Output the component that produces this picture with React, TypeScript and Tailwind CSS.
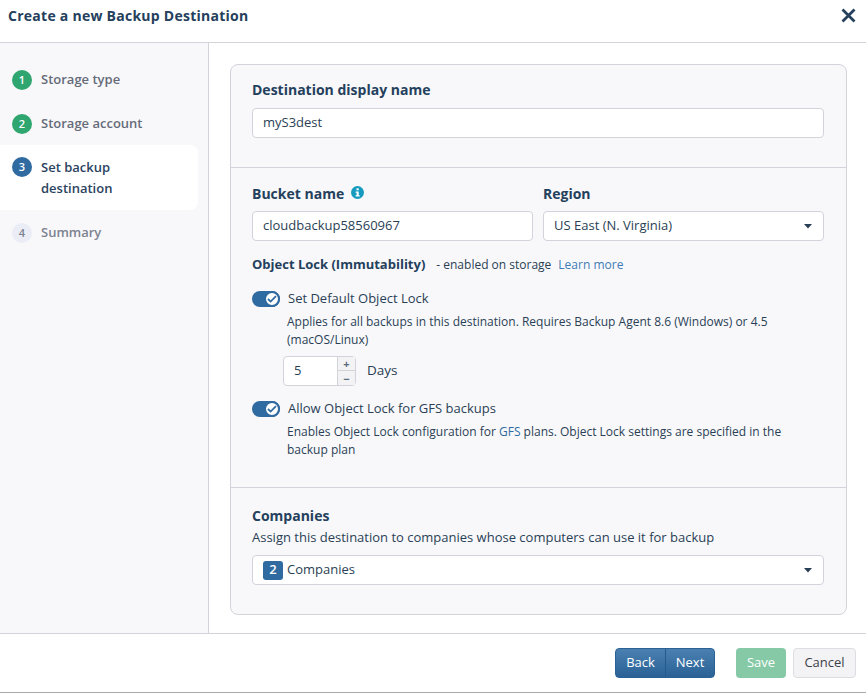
import React from 'react';

const steps = [
  { n: 1, label: 'Storage type', state: 'done' },
  { n: 2, label: 'Storage account', state: 'done' },
  { n: 3, label: 'Set backup destination', state: 'active' },
  { n: 4, label: 'Summary', state: 'todo' },
];

const Caret = () => (
  <svg width="8" height="5" viewBox="0 0 8 5" className="shrink-0">
    <path d="M0 0h8L4 4.5z" fill="#2a3f55" />
  </svg>
);

const Toggle = () => (
  <div className="relative h-4 w-[28px] shrink-0 rounded-full bg-[#2f6aa0]">
    <div className="absolute right-0 top-0 flex h-4 w-4 items-center justify-center rounded-full border-2 border-[#2f6aa0] bg-white">
      <svg width="10" height="8" viewBox="0 0 10 8" fill="none">
        <path d="M1 4l2.6 2.6L9 1.2" stroke="#2f6aa0" strokeWidth="1.8" />
      </svg>
    </div>
  </div>
);

const App: React.FC = () => {
  return (
    <div className="flex h-[693px] w-[866px] flex-col overflow-hidden border-b border-[#a9a9ad] bg-white font-['Open_Sans',sans-serif] text-[13px] text-[#2a3f55]">
      <header className="flex h-[43px] shrink-0 items-start justify-between border-b border-[#d3d3dc] pl-2 pr-[10px] pt-[6px]">
        <h1 className="text-[14px] font-bold leading-5 tracking-[0.26px] text-[#24405c]">Create a new Backup Destination</h1>
        <svg width="15" height="15" viewBox="0 0 15 15" className="mt-[2px]">
          <path d="M1.5 1.5l12 12M13.5 1.5l-12 12" stroke="#24405c" strokeWidth="2.8" />
        </svg>
      </header>

      <div className="flex min-h-0 flex-1">
        <aside className="w-[209px] shrink-0 border-r border-[#d3d3dc] bg-[#f8f8fb] pt-[15px] pr-[10px]">
          {steps.map((s) => (
            <div
              key={s.n}
              className={
                s.state === 'active'
                  ? '-mt-px mb-px flex h-[65px] w-[198px] gap-[9px] rounded-r-lg bg-white pl-3 pt-3'
                  : 'flex h-11 w-[198px] items-center gap-[9px] pl-3'
              }
            >
              <div
                className={
                  s.n < 3
                    ? 'flex h-5 w-5 shrink-0 items-center justify-center rounded-full bg-[#2fa56f] text-[11px] font-semibold text-white'
                    : s.n === 3
                      ? 'flex h-5 w-5 shrink-0 items-center justify-center rounded-full bg-[#2f6aa0] text-[11px] font-semibold text-white'
                      : 'flex h-5 w-5 shrink-0 items-center justify-center rounded-full bg-[#eaedf5] text-[11px] font-semibold text-[#7d8290]'
                }
              >
                {s.n}
              </div>
              <span
                className={
                  s.state === 'active'
                    ? 'w-[100px] text-[13px] font-semibold leading-[21px] text-[#2a4360]'
                    : s.state === 'done'
                      ? 'text-[13px] font-semibold text-[#666b78]'
                      : 'text-[13px] font-semibold text-[#7d8290]'
                }
              >
                {s.label}
              </span>
            </div>
          ))}
        </aside>

        <main className="min-w-0 flex-1 pl-[21px] pr-5 pt-[21px]">
          <div className="h-[551px] w-[617px] rounded-lg border border-[#d3d3dc] bg-[#f8f8fb]">
            <section className="h-[103px] border-b border-[#d3d3dc] px-[21px] pt-[15px]">
              <div className="text-[14px] font-bold leading-5 text-[#24405c]">Destination display name</div>
              <div className="mt-[8px] flex h-[30px] w-[572px] items-center rounded border border-[#d3d3dc] bg-white px-[10px] text-[13px]">
                myS3dest
              </div>
            </section>

            <section className="h-[320px] border-b border-[#d3d3dc] px-[21px] pt-[16px]">
              <div className="flex gap-[10px]">
                <div className="w-[281px]">
                  <div className="flex h-5 items-start gap-[7px] text-[14px] font-bold leading-[19px] text-[#24405c]">
                    Bucket name
                    <svg width="13" height="13" viewBox="0 0 13 13" className="mt-[2px]">
                      <circle cx="6.5" cy="6.5" r="6.5" fill="#169bc0" />
                      <rect x="5.5" y="2.3" width="2.2" height="2" fill="#fff" />
                      <path d="M4.6 5.5h3.1v3.8h1v1.2H4.6V9.3h1V6.7h-1z" fill="#fff" />
                    </svg>
                  </div>
                  <div className="mt-[7px] flex h-[30px] items-center rounded border border-[#d3d3dc] bg-white px-[10px] text-[13px]">
                    cloudbackup58560967
                  </div>
                </div>
                <div className="w-[281px]">
                  <div className="h-5 text-[14px] font-bold leading-[19px] text-[#24405c]">Region</div>
                  <div className="mt-[7px] flex h-[30px] items-center justify-between rounded border border-[#d3d3dc] bg-white pl-[10px] pr-[11px] text-[13px]">
                    US East (N. Virginia)
                    <Caret />
                  </div>
                </div>
              </div>

              <div className="mt-[14px] flex h-5 items-center text-[12px]">
                <span className="text-[13px] font-bold text-[#24405c]">Object Lock (Immutability)</span>
                <span className="ml-[11px]">- enabled on storage</span>
                <span className="ml-[7px] text-[#3f7cb5]">Learn more</span>
              </div>

              <div className="mt-[16px] flex h-4 items-center gap-[8px] text-[13px]">
                <Toggle />
                <span className="-mt-px">Set Default Object Lock</span>
              </div>
              <p className="ml-[35px] mt-[6px] w-[530px] text-[12px] leading-[18px]">
                Applies for all backups in this destination. Requires Backup Agent 8.6 (Windows) or 4.5 (macOS/Linux)
              </p>
              <div className="ml-[31px] mt-[7px] flex items-center gap-[11px]">
                <div className="flex h-[30px] w-[73px] rounded border border-[#d3d3dc] bg-white">
                  <div className="flex flex-1 items-center pl-[10px] text-[13px]">5</div>
                  <div className="flex w-[18px] flex-col border-l border-[#d3d3dc] bg-[#f3f3f6] text-[11px] font-bold leading-none text-[#5c6b7d]">
                    <div className="flex h-[14px] items-center justify-center border-b border-[#d3d3dc]">+</div>
                    <div className="flex h-[14px] items-center justify-center">−</div>
                  </div>
                </div>
                <span className="-mt-[2px] text-[13.5px]">Days</span>
              </div>

              <div className="mt-[15px] flex h-4 items-center gap-[8px] text-[13px]">
                <Toggle />
                <span>Allow Object Lock for GFS backups</span>
              </div>
              <p className="ml-[35px] mt-[6px] w-[530px] text-[12px] leading-[18px]">
                Enables Object Lock configuration for <span className="text-[#2f6aa0]">GFS</span> plans. Object Lock
                settings are specified in the backup plan
              </p>
            </section>

            <section className="px-[21px] pt-[18px]">
              <div className="text-[14px] font-bold leading-5 text-[#24405c]">Companies</div>
              <div className="mt-[1px] text-[13px] leading-5">
                Assign this destination to companies whose computers can use it for backup
              </div>
              <div className="mt-[8px] flex h-[30px] w-[572px] items-center justify-between rounded border border-[#d3d3dc] bg-white pl-[10px] pr-[11px]">
                <div className="flex items-center gap-[4px] text-[13px]">
                  <span className="flex h-[19px] w-5 items-center justify-center rounded-[3px] bg-[#2f6aa0] text-[13px] font-semibold text-white">
                    2
                  </span>
                  Companies
                </div>
                <Caret />
              </div>
            </section>
          </div>
        </main>
      </div>

      <footer className="flex h-[59px] shrink-0 items-center justify-end border-t border-[#d3d3dc] pr-[10px]">
        <div className="flex h-[30px] overflow-hidden rounded border border-[#2a6296] bg-gradient-to-b from-[#4a80b1] to-[#2a6296] text-[13px] font-medium text-white">
          <span className="flex w-[49px] items-center justify-center">Back</span>
          <span className="flex w-[49px] items-center justify-center border-l border-[#255a8c]">Next</span>
        </div>
        <div className="ml-[21px] flex h-[30px] w-[50px] items-center justify-center rounded bg-[#85c9a6] text-[13px] font-medium text-white">
          Save
        </div>
        <div className="ml-[7px] flex h-[30px] w-[63px] items-center justify-center rounded border border-[#dcdce3] bg-[#f3f3f6] text-[13px] text-[#3c3f46]">
          Cancel
        </div>
      </footer>
    </div>
  );
};

export default App;
